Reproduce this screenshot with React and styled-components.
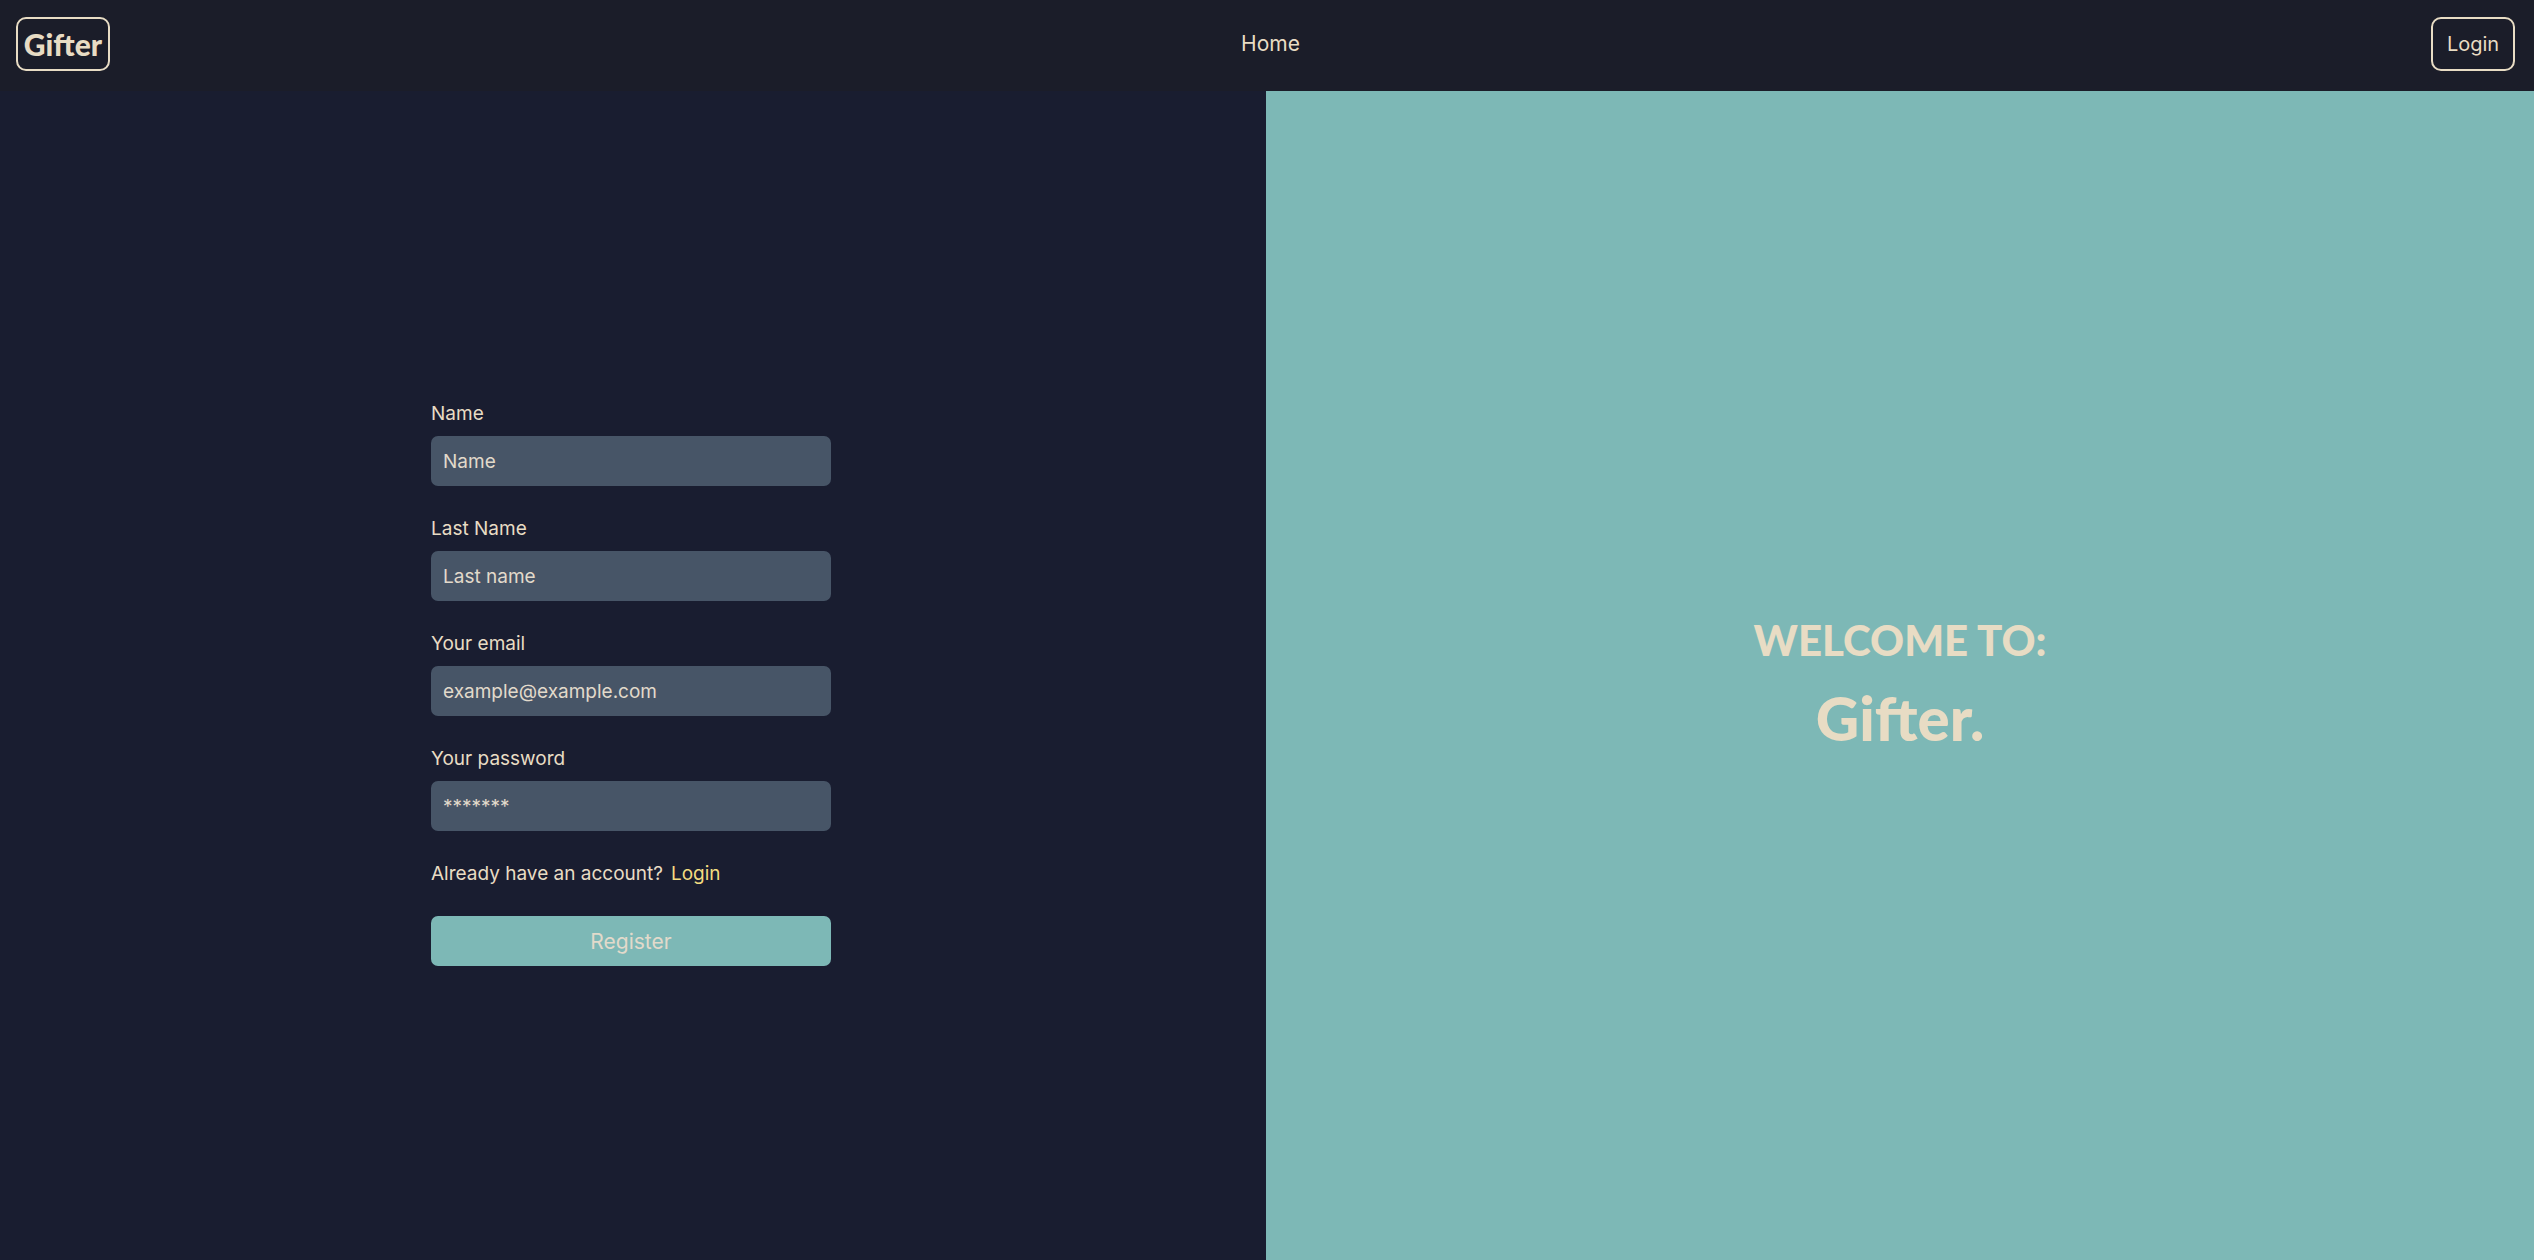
import React from "react";
import styled, { createGlobalStyle } from "styled-components";

const cream = "#e8dcc4";
const teal = "#7db8b6";
const body = `Inter, "Liberation Sans", sans-serif`;
const display = `Lato, "Liberation Sans", sans-serif`;

const GlobalStyle = createGlobalStyle`
  *, *::before, *::after { box-sizing: border-box; }
  body {
    margin: 0;
    background: #191d30;
    color: ${cream};
    font-family: ${body};
  }
  h1, p { margin: 0; }
`;

const Page = styled.div`
  display: flex;
  flex-direction: column;
  min-height: 100vh;
`;

const NavBar = styled.nav`
  display: flex;
  justify-content: space-between;
  align-items: center;
  padding: 17px 19px 20px 16px;
  background: #1b1d29;
`;

const NavLink = styled.a`
  color: ${cream};
  font-size: 21px;
  line-height: 50px;
  text-decoration: none;
`;

const LoginLink = styled(NavLink)`
  min-width: 84px;
  border: 2px solid ${cream};
  border-radius: 10px;
  font-size: 20px;
  text-align: center;
`;

const Logo = styled(LoginLink)`
  min-width: 94px;
  font-family: ${display};
  font-size: 30px;
  font-weight: 900;
`;

const Main = styled.main`
  flex: 1;
  display: grid;
  grid-template-columns: 1266fr 1268fr;
`;

const FormPanel = styled.section`
  display: flex;
  justify-content: center;
  align-items: center;
  padding: 16px 4px 0 0;
`;

const Form = styled.form`
  display: flex;
  flex-direction: column;
  gap: 30px;
  width: 400px;
`;

const Field = styled.div`
  display: flex;
  flex-direction: column;
  gap: 10px;
`;

const Label = styled.label`
  font-size: 19px;
  line-height: 25px;
`;

const Input = styled.input`
  height: 50px;
  padding: 0 12px;
  border: 0;
  border-radius: 7px;
  background: #475567;
  color: ${cream};
  font-family: ${body};
  font-size: 19px;
  &::placeholder { color: #e2dacb; opacity: 1; }
`;

const Prompt = styled.p`
  display: flex;
  gap: 8px;
  font-size: 19px;
  line-height: 25px;
`;

const PromptLink = styled.a`
  color: #f3dc80;
  text-decoration: none;
`;

const Submit = styled.button`
  height: 50px;
  border: 0;
  border-radius: 7px;
  background: ${teal};
  color: #e2dacb;
  font-family: ${body};
  font-size: 21px;
`;

const Welcome = styled.section`
  display: flex;
  flex-direction: column;
  justify-content: center;
  align-items: center;
  gap: 12px;
  padding-top: 16px;
  background: ${teal};
  font-family: ${display};
  font-weight: 900;
`;

const Greeting = styled.p`
  font-size: 42px;
  line-height: 56px;
`;

const Brand = styled.h1`
  font-size: 60px;
  font-weight: 900;
  line-height: 76px;
`;

const fields = [
  { id: "name", label: "Name", type: "text", placeholder: "Name" },
  { id: "lastName", label: "Last Name", type: "text", placeholder: "Last name" },
  { id: "email", label: "Your email", type: "email", placeholder: "example@example.com" },
  { id: "password", label: "Your password", type: "password", placeholder: "*******" },
];

export default function App() {
  return (
    <Page>
      <GlobalStyle />
      <NavBar>
        <Logo href="#">Gifter</Logo>
        <NavLink href="#">Home</NavLink>
        <LoginLink href="#login">Login</LoginLink>
      </NavBar>
      <Main>
        <FormPanel>
          <Form onSubmit={(event) => event.preventDefault()}>
            {fields.map(({ id, label, type, placeholder }) => (
              <Field key={id}>
                <Label htmlFor={id}>{label}</Label>
                <Input id={id} name={id} type={type} placeholder={placeholder} />
              </Field>
            ))}
            <Prompt>
              Already have an account?
              <PromptLink href="#login">Login</PromptLink>
            </Prompt>
            <Submit type="submit">Register</Submit>
          </Form>
        </FormPanel>
        <Welcome>
          <Greeting>WELCOME TO:</Greeting>
          <Brand>Gifter.</Brand>
        </Welcome>
      </Main>
    </Page>
  );
}
